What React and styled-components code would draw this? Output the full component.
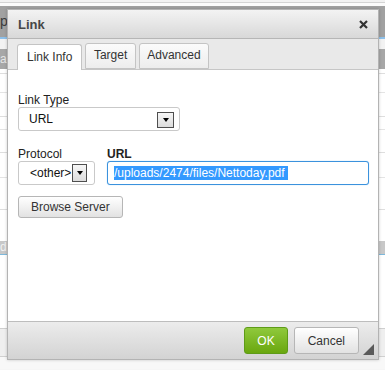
import styled, { createGlobalStyle } from "styled-components";

const GlobalStyle = createGlobalStyle`
  html, body {
    margin: 0;
    padding: 0;
    background: #fff;
    font-family: "Liberation Sans", Arial, sans-serif;
  }
`;

const Page = styled.div`
  position: relative;
  width: 385px;
  height: 370px;
  overflow: hidden;
  background: #f6f6f6;
`;

// the editor page that sits behind the dialog
const Backdrop = styled.div`
  display: flex;
  flex-direction: column;
`;

const Band = styled.div`
  height: ${(p) => p.$h}px;
  background: ${(p) => p.$bg || "#fff"};
  border-bottom: ${(p) => (p.$line ? `1px solid ${p.$line}` : "none")};
  color: ${(p) => p.$ink || "#444"};
  font-size: ${(p) => p.$size || 12}px;
  line-height: ${(p) => p.$h}px;
  white-space: nowrap;
  overflow: hidden;
`;

const Dialog = styled.div`
  position: absolute;
  left: 7px;
  top: 9px;
  width: 372px;
  height: 351px;
  box-sizing: border-box;
  border: 1px solid #b3b3b3;
  box-shadow: 0 0 3px rgba(0, 0, 0, 0.2);
  display: flex;
  flex-direction: column;
  background: #fff;
`;

const TitleBar = styled.div`
  height: 28px;
  flex: none;
  display: flex;
  align-items: center;
  justify-content: space-between;
  padding: 0 10px;
  border-bottom: 1px solid #b6b6b6;
  background: linear-gradient(#f3f3f3, #d8d8d8);
`;

const Title = styled.div`
  font-size: 13px;
  font-weight: bold;
  color: #474747;
`;

const Close = styled.svg`
  display: block;
  margin-top: 1px;
`;

const TabStrip = styled.div`
  height: 30px;
  flex: none;
  display: flex;
  align-items: flex-end;
  gap: 3px;
  padding-left: 9px;
  border-bottom: 1px solid #c6c6c6;
  background: #e9e9e9;
`;

const Tab = styled.div`
  height: ${(p) => (p.$active ? 25 : 24)}px;
  margin-bottom: ${(p) => (p.$active ? -1 : 0)}px;
  padding: 0 ${(p) => (p.$active ? 9 : 7.5)}px;
  border: 1px solid #c4c4c4;
  border-bottom: ${(p) => (p.$active ? "none" : "1px solid #c4c4c4")};
  border-radius: 3px 3px 0 0;
  background: ${(p) => (p.$active ? "#fff" : "linear-gradient(#fbfbfb, #ededed)")};
  color: #333;
  font-size: 12px;
  line-height: ${(p) => (p.$active ? 25 : 23)}px;
  box-sizing: content-box;
`;

const Body = styled.div`
  flex: 1;
  padding: 23px 9px 0 10px;
  background: #fff;
`;

const Label = styled.div`
  font-size: 12px;
  line-height: 14px;
  color: #222;
  font-weight: ${(p) => (p.$bold ? "bold" : "normal")};
`;

const Select = styled.div`
  width: ${(p) => p.$w}px;
  height: 24px;
  box-sizing: border-box;
  display: flex;
  align-items: center;
  justify-content: space-between;
  padding: 0 ${(p) => p.$pr}px 0 ${(p) => p.$pl}px;
  border: 1px solid #c9c9c9;
  border-radius: 3px;
  background: #fff;
  font-size: 12px;
  color: #111;
`;

const ArrowBox = styled.div`
  width: ${(p) => p.$w}px;
  height: ${(p) => p.$h}px;
  box-sizing: border-box;
  border: 1px solid #4e4e4e;
  background: linear-gradient(#f6f6f6, #dcdcdc);
  display: flex;
  align-items: center;
  justify-content: center;
  margin-top: ${(p) => p.$mt || 0}px;
`;

const Caret = styled.div`
  width: 0;
  height: 0;
  border-left: 3.5px solid transparent;
  border-right: 3.5px solid transparent;
  border-top: 4px solid #000;
`;

const Row = styled.div`
  display: flex;
  gap: 12px;
  margin-top: 16px;
`;

const Field = styled.div`
  flex: ${(p) => (p.$grow ? 1 : "none")};
  display: flex;
  flex-direction: column;
`;

const UrlBox = styled.div`
  height: 24px;
  box-sizing: border-box;
  display: flex;
  align-items: center;
  padding-left: 6px;
  border: 1px solid #3b92dd;
  border-radius: 3px;
  box-shadow: 0 0 1px #7fbcef;
  background: #fff;
  font-size: 12px;
`;

const Selected = styled.span`
  background: #3399ff;
  color: #fff;
  line-height: 14px;
  padding-right: 3px;
`;

const Button = styled.button`
  display: block;
  height: ${(p) => p.$h || 22}px;
  margin-top: ${(p) => p.$mt || 0}px;
  padding: 0 ${(p) => p.$px || 10}px;
  box-sizing: border-box;
  border: 1px solid ${(p) => (p.$primary ? "#5e9b18" : "#b6b6b6")};
  border-radius: 3px;
  background: ${(p) =>
    p.$primary ? "linear-gradient(#8fc93c, #6aa70f)" : "linear-gradient(#ffffff, #e2e2e2)"};
  color: ${(p) => (p.$primary ? "#fff" : "#333")};
  font-family: "Liberation Sans", Arial, sans-serif;
  font-size: 12px;
  cursor: pointer;
`;

const Footer = styled.div`
  position: relative;
  height: 37px;
  flex: none;
  display: flex;
  align-items: center;
  justify-content: flex-end;
  gap: 6px;
  padding-right: 19px;
  border-top: 1px solid #bdbdbd;
  background: linear-gradient(#ececec, #d3d3d3);
`;

const Grip = styled.svg`
  position: absolute;
  right: 4px;
  bottom: 4px;
  display: block;
`;

const App = () => {
  return (
    <Page>
      <GlobalStyle />
      <Backdrop>
        <Band $h={2} $bg="#f2f2f2" />
        <Band $h={1} $bg="#d4d4d4" />
        <Band $h={3} $bg="#fbfbfb" />
        <Band $h={31} $bg="#a1a1a1" $ink="#3c3c3c" $size={14}>p</Band>
        <Band $h={2} $bg="#8dc0ea" />
        <Band $h={10} $bg="#f2f2f2" />
        <Band $h={20} $bg="#a7a7a7" $ink="#e6e6e6">al</Band>
        <Band $h={4} $line="#dedede" />
        <Band $h={18} $line="#e4e4e4" />
        <Band $h={23} $line="#dedede" />
        <Band $h={12} $line="#e4e4e4" />
        <Band $h={22} $line="#dedede" />
        <Band $h={24} $line="#e4e4e4" />
        <Band $h={31} $line="#dedede" />
        <Band $h={31} />
        <Band $h={13} $bg="#c8c8c8" $ink="#f2f2f2" $line="#7db9dc">d</Band>
        <Band $h={73} $line="#cfcfcf" />
        <Band $h={27} $bg="#efefef" $line="#d0d0d0" />
        <Band $h={12} $bg="#f8f8f8" />
      </Backdrop>

      <Dialog>
        <TitleBar>
          <Title>Link</Title>
          <Close width="9" height="9" viewBox="0 0 9 9">
            <path d="M1 1 L8 8 M8 1 L1 8" stroke="#333" strokeWidth="2.2" />
          </Close>
        </TitleBar>

        <TabStrip>
          <Tab $active>Link Info</Tab>
          <Tab>Target</Tab>
          <Tab>Advanced</Tab>
        </TabStrip>

        <Body>
          <Label>Link Type</Label>
          <Select $w={162} $pl={10} $pr={5}>
            <span>URL</span>
            <ArrowBox $w={17} $h={16} $mt={2}>
              <Caret />
            </ArrowBox>
          </Select>

          <Row>
            <Field>
              <Label>Protocol</Label>
              <Select $w={77} $pl={11} $pr={7}>
                <span>&lt;other&gt;</span>
                <ArrowBox $w={15} $h={18}>
                  <Caret />
                </ArrowBox>
              </Select>
            </Field>
            <Field $grow>
              <Label $bold>URL</Label>
              <UrlBox>
                <Selected>/uploads/2474/files/Nettoday.pdf</Selected>
              </UrlBox>
            </Field>
          </Row>

          <Button $mt={11} $px={12}>Browse Server</Button>
        </Body>

        <Footer>
          <Button $primary $h={27} $px={12}>OK</Button>
          <Button $h={27} $px={13}>Cancel</Button>
          <Grip width="11" height="11" viewBox="0 0 11 11">
            <polygon points="11,0 11,11 0,11" fill="#5a5a5a" />
          </Grip>
        </Footer>
      </Dialog>
    </Page>
  );
};

export default App;
